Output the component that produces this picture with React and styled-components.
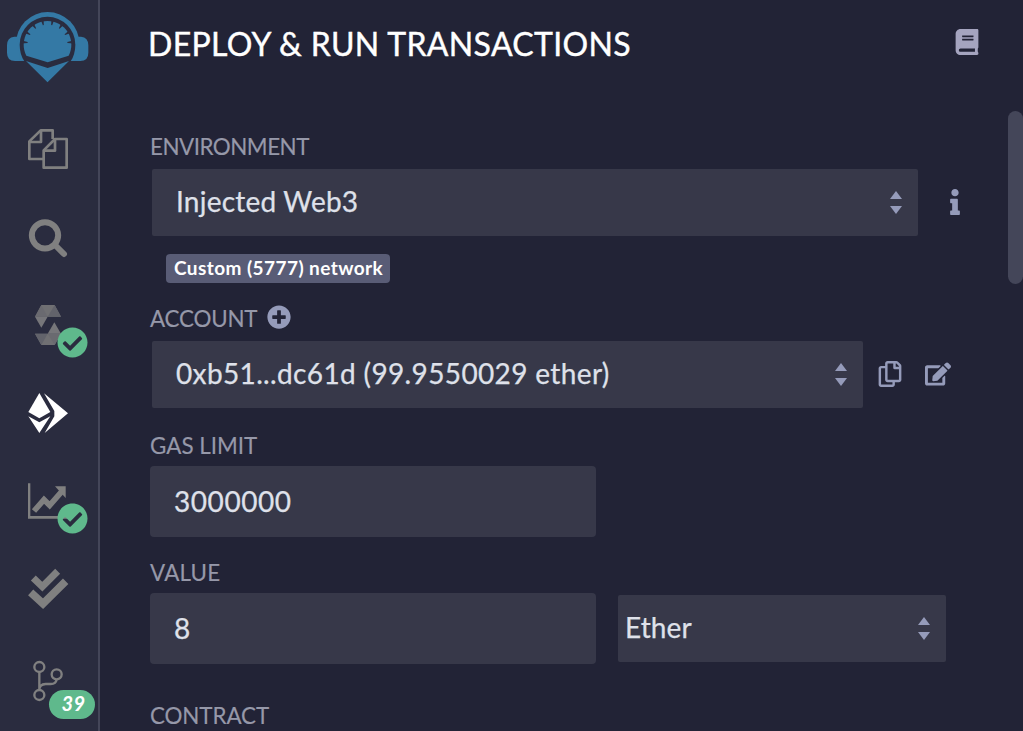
import React from "react";
import styled, { createGlobalStyle } from "styled-components";
import { FaBook, FaInfo, FaPlusCircle, FaRegCopy, FaEdit, FaCheckCircle } from "react-icons/fa";

const c = {
  main: "#222336",
  side: "#2a2c3f",
  line: "#444659",
  field: "#373849",
  label: "#9698a9",
  text: "#dfe1ea",
  icon: "#959bba",
  gray: "#808080",
  green: "#5fb98c",
};

const GlobalStyle = createGlobalStyle`
  * { box-sizing: border-box; }
  body { margin: 0; background: ${c.main}; font-family: Lato, "Liberation Sans", sans-serif; overflow: hidden; }
  svg { display: block; flex: none; }
`;

const Shell = styled.div`
  display: flex;
  width: 1023px;
  height: 731px;
  overflow: hidden;
  background: ${c.main};
`;
const Sidebar = styled.nav`
  flex: none;
  width: 100px;
  background: ${c.side};
  border-right: 2px solid ${c.line};
`;
const LogoCell = styled.div`
  height: 105px;
  padding: 12px 0 0 7px;
`;
const NavItem = styled.div`
  position: relative;
  height: 88px;
  padding: ${(p) => p.$top || 24}px 0 0 28px;
`;
const StatusDot = styled.span`
  position: absolute;
  left: 57px;
  top: 46px;
  color: ${c.green};
`;
const CountBadge = styled.span`
  position: absolute;
  left: 49px;
  top: 57px;
  width: 46px;
  height: 29px;
  padding-left: 3px;
  border-radius: 15px;
  background: ${c.green};
  color: #fff;
  font: italic 700 20px/27px Lato, sans-serif;
  letter-spacing: 0.5px;
  text-align: center;
`;
const Panel = styled.main`
  flex: 1;
  display: flex;
  flex-direction: column;
`;
const Header = styled.header`
  flex: none;
  display: flex;
  justify-content: space-between;
  height: 111px;
  padding: 24px 43px 0 48px;
  color: #a5a4bf;
  svg { margin-top: 5px; }
`;
const Title = styled.h1`
  margin: 0;
  color: #fff;
  font-size: 32px;
  line-height: 40px;
  font-weight: 400;
  letter-spacing: 0.34px;
  -webkit-text-stroke: 0.4px #fff;
  white-space: nowrap;
`;
const Content = styled.div`
  flex: 1;
  display: flex;
  justify-content: space-between;
  min-height: 0;
`;
const Form = styled.div`
  width: 880px;
  padding: 20px 0 0 50px;
`;
const ScrollThumb = styled.div`
  width: 15px;
  height: 173px;
  border-radius: 8px;
  background: #444659;
`;
const Label = styled.div`
  display: flex;
  align-items: center;
  height: 30px;
  margin-top: ${(p) => p.$mt || 0}px;
  color: ${c.label};
  font-size: 22.4px;
  letter-spacing: ${(p) => p.$ls || 0}px;
  -webkit-text-stroke: 0.15px ${c.label};
  white-space: nowrap;
  svg { margin: 0 0 2px 10px; color: ${c.icon}; }
`;
const Row = styled.div`
  display: flex;
  align-items: center;
  margin-top: ${(p) => p.$mt}px;
  color: ${c.icon};
`;
const Value = styled.span`
  display: block;
  color: ${c.text};
  font-size: 28px;
  line-height: 71px;
  letter-spacing: ${(p) => p.$ls || 0}px;
  -webkit-text-stroke: 0.25px ${c.text};
  white-space: nowrap;
`;
const SelectBox = styled.div`
  display: flex;
  align-items: center;
  justify-content: space-between;
  width: ${(p) => p.$w}px;
  height: 67px;
  margin-left: ${(p) => p.$ml || 2}px;
  padding: 0 16px 0 ${(p) => p.$pl || 24}px;
  border-radius: 2px;
  background: ${c.field};
  ${Value} { line-height: 65px; margin-bottom: 2px; }
`;
const InputBox = styled.div`
  width: 446px;
  height: 71px;
  padding: 0 24px;
  border-radius: 4px;
  background: ${c.field};
`;
const NetworkPill = styled.div`
  width: 224px;
  height: 29px;
  margin: 18px 0 0 16px;
  padding-left: 8px;
  border-radius: 4px;
  background: #595c76;
  color: #fff;
  font-size: 19px;
  font-weight: 700;
  line-height: 27px;
  letter-spacing: 0.43px;
  white-space: nowrap;
`;
const IconSlot = styled.span`
  margin: 0 0 ${(p) => p.$mb || 2}px ${(p) => p.$ml}px;
`;

const Arrows = () => (
  <svg width="12" height="23" viewBox="0 0 12 23" fill={c.icon}>
    <path d="M6 0l6 8H0zM6 23l6-8H0z" />
  </svg>
);

const Logo = () => (
  <svg width="82" height="71" viewBox="21 36 246 213" fill="#3479a5">
    <path d="M48 183V131A95 95 0 0 1 238 131V183Z" />
    <path d="M52 110H43Q21 112 21 136V158Q21 183 45 183H60ZM234 110H243Q265 112 265 136V158Q265 183 241 183H226Z" />
    <path d="M59 134A83.500 83.500 0 0 1 226 134Q226 162 212 184H73Q59 162 59 134Z" fill={c.side} />
    <path d="M79 170A71.500 71.500 0 1 1 206 170L143 190Z" transform="translate(0 -3)" />
    <g fill={c.side}>
      {[-84, -60, -36, -12, 12, 36, 60, 84].map((a) => (
        <path key={a} transform={`rotate(${a} 142.5 134)`} d="M138 56L141 74H144L147 56Z" />
      ))}
    </g>
    <path d="M78 183L143 204L207 183L142.500 247Z" />
  </svg>
);

const NavIcon = ({ y, children }) => (
  <svg width="40" height="40" viewBox={`84 ${y} 120 120`} fill={c.gray} overflow="visible">
    {children}
  </svg>
);

const Dot = () => (
  <StatusDot>
    <FaCheckCircle size={31} />
  </StatusDot>
);

export default function App() {
  return (
    <Shell>
      <GlobalStyle />
      <Sidebar>
        <LogoCell><Logo /></LogoCell>
        <NavItem>
          <NavIcon y={57}>
            <g fill="none" stroke={c.gray} strokeWidth="8" strokeLinejoin="round">
              <path d="M131 147H88V94L122 61H158V87" />
              <path d="M123 61V96H88" />
              <path d="M131 121V173H200V87H165Z" />
              <path d="M165 87V122H131" />
            </g>
          </NavIcon>
        </NavItem>
        <NavItem>
          <NavIcon y={321}>
            <g fill="none" stroke={c.gray} strokeLinecap="round">
              <circle cx="135" cy="376" r="39.500" strokeWidth="18" />
              <path d="M168 408L192 432" strokeWidth="18" />
            </g>
          </NavIcon>
        </NavItem>
        <NavItem>
          <NavIcon y={45}>
            <path d="M124 45H164L183 80H105Z" fill="#707073" />
            <path d="M105 80H143L124 113Z" fill="#76767a" />
            <path d="M124 45L143 80H105Z" fill="#6a6a70" />
            <path d="M164 45L183 80H143Z" fill="#62636b" />
            <path d="M124 165H164L183 131H105Z" fill="#707073" />
            <path d="M105 131H143L124 165Z" fill="#62636b" />
            <path d="M164 165L183 131H143Z" fill="#6a6a70" />
            <path d="M143 131H183L163 97Z" fill="#76767a" />
          </NavIcon>
          <Dot />
        </NavItem>
        <NavItem>
          <NavIcon y={309}>
            <g fill="#fff">
              <path d="M118 309L151 366L118 385L85 366Z" />
              <path d="M85 379L118 397L151 379L118 429Z" />
              <path d="M132 310L204 370L134 429L163 379V363Z" />
            </g>
          </NavIcon>
        </NavItem>
        <NavItem>
          <NavIcon y={33}>
            <path d="M84 40H91V138H204V146H84Z" />
            <path d="M102 123L132 89L149 106L185 65" fill="none" stroke={c.gray} strokeWidth="17" />
            <path d="M165 49H197V84Z" />
          </NavIcon>
          <Dot />
        </NavItem>
        <NavItem>
          <NavIcon y={297}>
            <g fill="none" stroke={c.gray}>
              <path d="M100 324L127 350L173 304" strokeWidth="21" />
              <path d="M92 367L129 401L197 334" strokeWidth="23" />
            </g>
          </NavIcon>
        </NavItem>
        <NavItem $top={28}>
          <NavIcon y={63}>
            <g fill="none" stroke={c.gray} strokeWidth="7">
              <circle cx="118" cy="81" r="15" />
              <circle cx="170" cy="103" r="15" />
              <circle cx="118" cy="165" r="15" />
              <path d="M118 96V150M170 118Q168 132 152 132H137Q118 133 118 150" />
            </g>
          </NavIcon>
          <CountBadge>39</CountBadge>
        </NavItem>
      </Sidebar>
      <Panel>
        <Header>
          <Title>DEPLOY &amp; RUN TRANSACTIONS</Title>
          <FaBook size={26} />
        </Header>
        <Content>
          <Form>
            <Label $ls={-0.5}>ENVIRONMENT</Label>
            <Row $mt={8}>
              <SelectBox $w={766}>
                <Value $ls={0.22}>Injected Web3</Value>
                <Arrows />
              </SelectBox>
              <IconSlot $ml={24} $mb={2}><FaInfo size={26} /></IconSlot>
            </Row>
            <NetworkPill>Custom (5777) network</NetworkPill>
            <Label $mt={20} $ls={-0.2}>ACCOUNT<FaPlusCircle size={24} /></Label>
            <Row $mt={8}>
              <SelectBox $w={711}>
                <Value $ls={0.36}>0xb51...dc61d (99.9550029 ether)</Value>
                <Arrows />
              </SelectBox>
              <IconSlot $ml={14}><FaRegCopy size={26} /></IconSlot>
              <IconSlot $ml={22} $mb={1}><FaEdit size={26} /></IconSlot>
            </Row>
            <Label $mt={22}>GAS LIMIT</Label>
            <Row $mt={6}>
              <InputBox><Value $ls={0.56}>3000000</Value></InputBox>
            </Row>
            <Label $mt={20} $ls={0.2}>VALUE</Label>
            <Row $mt={6}>
              <InputBox><Value>8</Value></InputBox>
              <SelectBox $w={328} $ml={22} $pl={7}>
                <Value $ls={0.1}>Ether</Value>
                <Arrows />
              </SelectBox>
            </Row>
            <Label $mt={36} $ls={-0.1}>CONTRACT</Label>
          </Form>
          <ScrollThumb />
        </Content>
      </Panel>
    </Shell>
  );
}
